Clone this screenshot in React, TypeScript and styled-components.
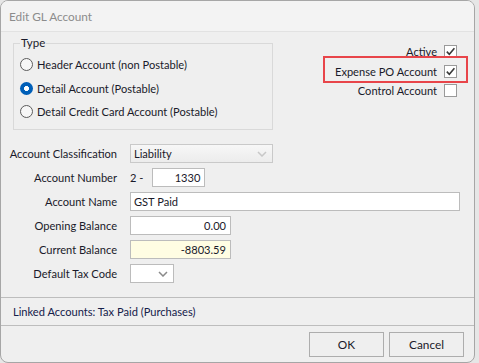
import React from "react";
import styled, { createGlobalStyle } from "styled-components";

const GlobalStyle = createGlobalStyle`
  html, body {
    margin: 0;
    padding: 0;
    background: #e6e6e6;
  }
  body {
    font-family: Lato, "Liberation Sans", sans-serif;
    font-size: 11.1px;
    color: #1a1a2a;
  }
`;

const Window = styled.div`
  width: 475px;
  height: 363px;
  box-sizing: border-box;
  border: 1px solid #a6a6a6;
  border-radius: 8px;
  background: #efefef;
  display: flex;
  flex-direction: column;
  overflow: hidden;
`;

const TitleBar = styled.div`
  height: 30px;
  flex: none;
  display: flex;
  align-items: center;
  padding-left: 8px;
  background: #f3f3f3;
  border-bottom: 1px solid #e2e2e2;
  color: #8c8c8c;
  font-size: 11.8px;
`;

const Body = styled.div`
  flex: 1;
  display: flex;
  flex-direction: column;
  padding: 3px 0 0;
`;

const TopRow = styled.div`
  display: flex;
  align-items: flex-start;
  padding: 0 17px 0 12px;
`;

const GroupBox = styled.fieldset`
  width: 260px;
  height: 95px;
  box-sizing: border-box;
  margin: 0;
  padding: 2px 0 0 6px;
  border: 1px solid #d9d9d9;
  border-radius: 0;
`;

const Legend = styled.legend`
  padding: 0 1px;
  margin-left: 0;
  line-height: 16px;
  font-size: 11.5px;
`;

const RadioRow = styled.label`
  display: flex;
  align-items: center;
  height: 23.5px;
  gap: 4px;
  white-space: nowrap;
`;

const RadioDot = styled.span<{ checked?: boolean }>`
  width: 13px;
  height: 13px;
  box-sizing: border-box;
  border-radius: 50%;
  flex: none;
  border: ${(p) => (p.checked ? "none" : "1px solid #5c5c5c")};
  background: ${(p) =>
    p.checked
      ? "radial-gradient(circle, #ffffff 0 2.2px, #005fb8 2.8px)"
      : "#f7f7f7"};
`;

const CheckColumn = styled.div`
  margin-left: auto;
  margin-top: 7px;
  display: flex;
  flex-direction: column;
  align-items: flex-end;
`;

const CheckRow = styled.div<{ highlight?: boolean }>`
  position: relative;
  display: flex;
  align-items: center;
  gap: 7px;
  height: 19.5px;
  white-space: nowrap;
  ${(p) =>
    p.highlight
      ? `&::after {
    content: "";
    position: absolute;
    left: -12px;
    right: -11px;
    top: -6px;
    bottom: -2px;
    border: 2px solid #e8454a;
  }`
      : ""}
`;

const CheckBox = styled.span`
  width: 13px;
  height: 13px;
  box-sizing: border-box;
  border: 1px solid #9a9a9a;
  background: #ffffff;
  display: flex;
  align-items: center;
  justify-content: center;
`;

const Form = styled.div`
  margin-top: 14px;
  display: grid;
  grid-template-columns: 104px 1fr;
  grid-auto-rows: 19px;
  column-gap: 13px;
  row-gap: 5px;
  padding: 0 14px 0 12px;
  align-items: center;
`;

const FieldLabel = styled.div`
  justify-self: end;
  white-space: nowrap;
`;

const FieldCell = styled.div`
  display: flex;
  align-items: center;
  height: 100%;
`;

const TextBox = styled.div<{ width?: number; bg?: string; right?: boolean }>`
  width: ${(p) => (p.width ? `${p.width}px` : "100%")};
  height: 100%;
  box-sizing: border-box;
  border: 1px solid #bcbcbc;
  background: ${(p) => p.bg ?? "#ffffff"};
  display: flex;
  align-items: center;
  justify-content: ${(p) => (p.right ? "flex-end" : "flex-start")};
  padding: 0 4px 0 3px;
  white-space: nowrap;
`;

const SelectBox = styled.div<{ width: number; disabled?: boolean }>`
  width: ${(p) => p.width}px;
  height: 100%;
  box-sizing: border-box;
  border: 1px solid ${(p) => (p.disabled ? "#c9c9c9" : "#bcbcbc")};
  background: ${(p) =>
    p.disabled ? "linear-gradient(#f7f7f7, #ececec)" : "#ffffff"};
  display: flex;
  align-items: center;
  padding: 0 5px 0 3px;
`;

const SelectText = styled.span`
  flex: 1;
`;

const Prefix = styled.span`
  margin: 0 9px 0 0;
`;

const Separator = styled.div`
  height: 1px;
  background: #bdbdbd;
  flex: none;
`;

const Spacer = styled.div`
  flex: 1;
`;

const LinkedRow = styled.div`
  height: 27px;
  display: flex;
  align-items: center;
  padding-left: 12px;
  color: #14204a;
`;

const ButtonRow = styled.div`
  display: flex;
  justify-content: flex-end;
  gap: 5px;
  padding: 6px 10px 5px 0;
`;

const Button = styled.button`
  width: 75px;
  height: 25px;
  box-sizing: border-box;
  border: 1px solid #adadad;
  background: #efefef;
  font: inherit;
  font-size: 11.8px;
  color: #1a1a2a;
  padding: 0;
`;

const Check = () => (
  <svg width="11" height="11" viewBox="0 0 11 11">
    <path d="M1.8 5.6 L4.3 8.2 L9.4 2.2" fill="none" stroke="#3a3a3a" strokeWidth="1.6" />
  </svg>
);

const Chevron = ({ color }: { color: string }) => (
  <svg width="10" height="6" viewBox="0 0 10 6">
    <path d="M1 1 L5 5 L9 1" fill="none" stroke={color} strokeWidth="1.5" />
  </svg>
);

const radios = [
  { text: "Header Account (non Postable)", checked: false },
  { text: "Detail Account (Postable)", checked: true },
  { text: "Detail Credit Card Account (Postable)", checked: false },
];

const checks = [
  { text: "Active", checked: true },
  { text: "Expense PO Account", checked: true, highlight: true },
  { text: "Control Account", checked: false },
];

export default function App() {
  return (
    <>
      <GlobalStyle />
      <Window>
        <TitleBar>Edit GL Account</TitleBar>
        <Body>
          <TopRow>
            <GroupBox>
              <Legend>Type</Legend>
              {radios.map((r) => (
                <RadioRow key={r.text}>
                  <RadioDot checked={r.checked} />
                  {r.text}
                </RadioRow>
              ))}
            </GroupBox>
            <CheckColumn>
              {checks.map((c) => (
                <CheckRow key={c.text} highlight={c.highlight}>
                  {c.text}
                  <CheckBox>{c.checked && <Check />}</CheckBox>
                </CheckRow>
              ))}
            </CheckColumn>
          </TopRow>
          <Form>
            <FieldLabel>Account Classification</FieldLabel>
            <FieldCell>
              <SelectBox width={143} disabled>
                <SelectText>Liability</SelectText>
                <Chevron color="#c8c8c8" />
              </SelectBox>
            </FieldCell>

            <FieldLabel>Account Number</FieldLabel>
            <FieldCell>
              <Prefix>2 -</Prefix>
              <TextBox width={53} right>1330</TextBox>
            </FieldCell>

            <FieldLabel>Account Name</FieldLabel>
            <FieldCell>
              <TextBox>GST Paid</TextBox>
            </FieldCell>

            <FieldLabel>Opening Balance</FieldLabel>
            <FieldCell>
              <TextBox width={101} right>0.00</TextBox>
            </FieldCell>

            <FieldLabel>Current Balance</FieldLabel>
            <FieldCell>
              <TextBox width={101} right bg="#fffde3">-8803.59</TextBox>
            </FieldCell>

            <FieldLabel>Default Tax Code</FieldLabel>
            <FieldCell>
              <SelectBox width={44}>
                <SelectText />
                <Chevron color="#8a8a8a" />
              </SelectBox>
            </FieldCell>
          </Form>
          <Spacer />
          <Separator />
          <LinkedRow>Linked Accounts: Tax Paid (Purchases)</LinkedRow>
          <Separator />
          <ButtonRow>
            <Button>OK</Button>
            <Button>Cancel</Button>
          </ButtonRow>
        </Body>
      </Window>
    </>
  );
}
